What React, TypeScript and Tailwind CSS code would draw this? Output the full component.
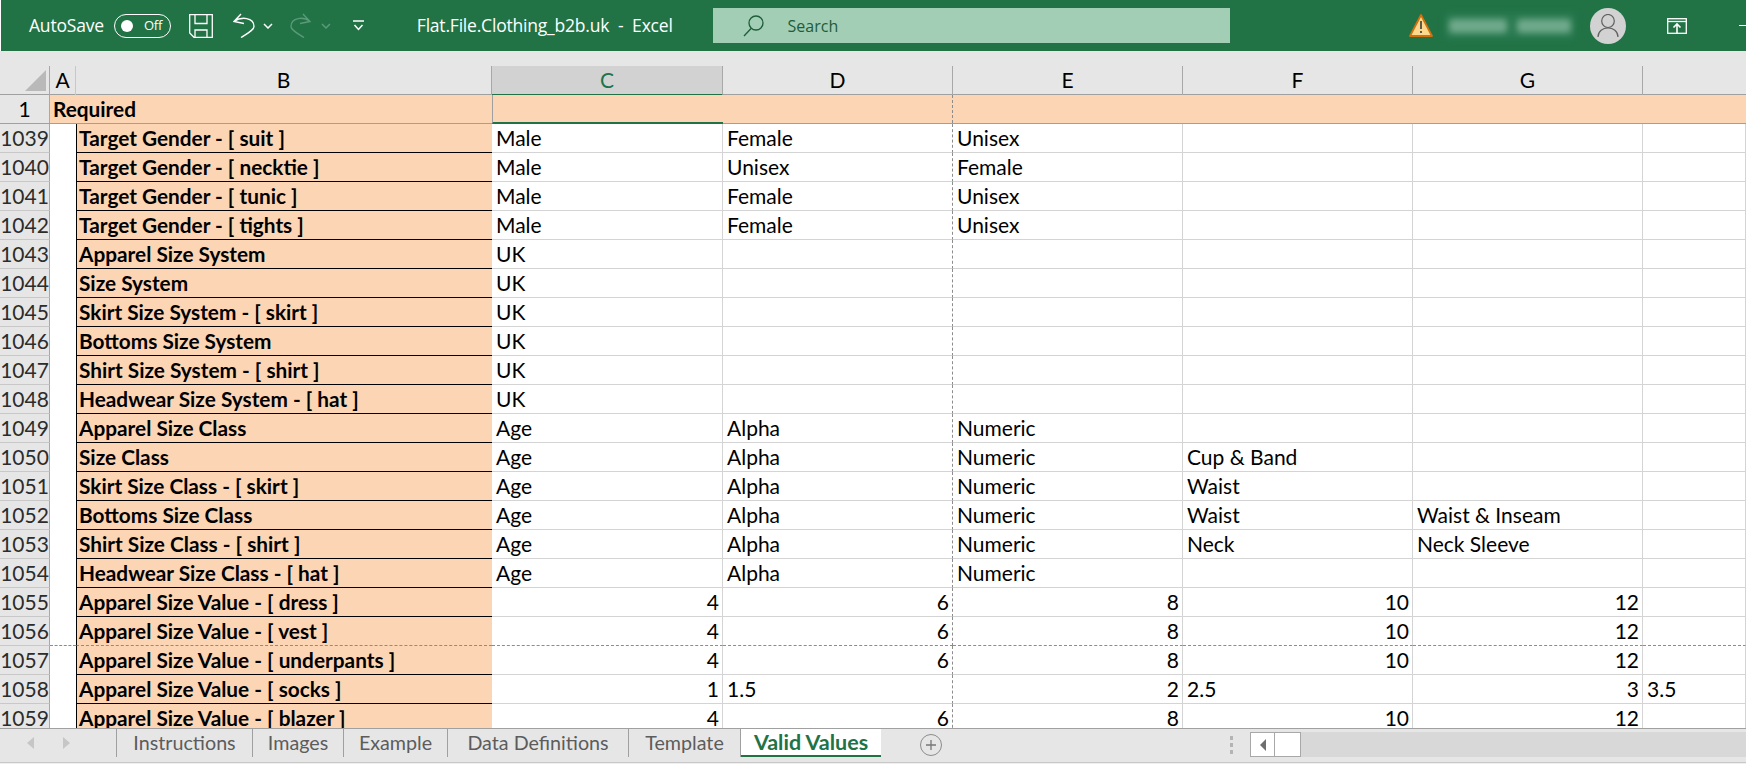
import React from "react";

type Cell = string | number;

const rows: [string, string, Cell[]][] = [
  ["1039", "Target Gender - [ suit ]", ["Male", "Female", "Unisex"]],
  ["1040", "Target Gender - [ necktie ]", ["Male", "Unisex", "Female"]],
  ["1041", "Target Gender - [ tunic ]", ["Male", "Female", "Unisex"]],
  ["1042", "Target Gender - [ tights ]", ["Male", "Female", "Unisex"]],
  ["1043", "Apparel Size System", ["UK"]],
  ["1044", "Size System", ["UK"]],
  ["1045", "Skirt Size System - [ skirt ]", ["UK"]],
  ["1046", "Bottoms Size System", ["UK"]],
  ["1047", "Shirt Size System - [ shirt ]", ["UK"]],
  ["1048", "Headwear Size System - [ hat ]", ["UK"]],
  ["1049", "Apparel Size Class", ["Age", "Alpha", "Numeric"]],
  ["1050", "Size Class", ["Age", "Alpha", "Numeric", "Cup & Band"]],
  ["1051", "Skirt Size Class - [ skirt ]", ["Age", "Alpha", "Numeric", "Waist"]],
  ["1052", "Bottoms Size Class", ["Age", "Alpha", "Numeric", "Waist", "Waist & Inseam"]],
  ["1053", "Shirt Size Class - [ shirt ]", ["Age", "Alpha", "Numeric", "Neck", "Neck Sleeve"]],
  ["1054", "Headwear Size Class - [ hat ]", ["Age", "Alpha", "Numeric"]],
  ["1055", "Apparel Size Value - [ dress ]", [4, 6, 8, 10, 12]],
  ["1056", "Apparel Size Value - [ vest ]", [4, 6, 8, 10, 12]],
  ["1057", "Apparel Size Value - [ underpants ]", [4, 6, 8, 10, 12]],
  ["1058", "Apparel Size Value - [ socks ]", [1, "1.5", 2, "2.5", 3, "3.5"]],
  ["1059", "Apparel Size Value - [ blazer ]", [4, 6, 8, 10, 12]],
];

const columns = [0, 1, 2, 3, 4, 5];
const gridCols = "grid grid-cols-[50px_26px_416px_231px_230px_230px_230px_230px_103px]";

const tabs = [
  { name: "Instructions", width: "w-[136px]" },
  { name: "Images", width: "w-[91px]" },
  { name: "Example", width: "w-[104px]" },
  { name: "Data Definitions", width: "w-[181px]" },
  { name: "Template", width: "w-[112px]" },
];

const TitleBar = () => (
  <div className="flex h-[51px] shrink-0 items-center border-l border-white bg-[#217346] font-['Open_Sans',sans-serif] text-white">
    <span className="ml-[28px] w-[76px] text-[17.5px] leading-none tracking-[-0.2px]">AutoSave</span>
    <div className="ml-[9px] flex h-[24px] w-[57px] items-center rounded-full border border-white pl-[6px]">
      <div className="h-[12px] w-[12px] rounded-full bg-white" />
      <span className="ml-[11px] text-[13px] leading-none tracking-[-0.2px]">Off</span>
    </div>
    <svg className="ml-[18px]" width="24" height="24" viewBox="0 0 24 24" fill="none" stroke="white" strokeWidth="1.3">
      <path d="M.7.7H23.3V23.3H5L.7 19Z" />
      <path d="M6 .7V9.5H18V.7M6 23.3V16H18V23.3" />
    </svg>
    <svg className="ml-[20px]" width="22" height="25" viewBox="0 0 22 25" fill="none" stroke="white" strokeWidth="1.4">
      <path d="M8 1 1 8.5 11 10.5M1 8.500C8 3.500 21 4 21 13.500 21 17 15 20 8 24.500" />
    </svg>
    <svg className="ml-[8px]" width="10" height="6" viewBox="0 0 10 6" fill="none" stroke="white" strokeWidth="1.5">
      <path d="M1 1 5 5 9 1" />
    </svg>
    <svg className="ml-[17px]" width="22" height="25" viewBox="0 0 22 25" fill="none" stroke="#5a9a78" strokeWidth="1.4">
      <path d="M13 1 20 8.500 10 10.500M20 8.500C14 3.500 1 4 1 13.500 1 17 7 20 14 24.500" />
    </svg>
    <svg className="ml-[9px]" width="10" height="6" viewBox="0 0 10 6" fill="none" stroke="#5a9a78" strokeWidth="1.5">
      <path d="M1 1 5 5 9 1" />
    </svg>
    <svg className="ml-[22px]" width="11" height="11" viewBox="0 0 11 11" fill="none" stroke="white" strokeWidth="1.5">
      <path d="M0 1H11M1.500 5 5.500 9.500 9.500 5" />
    </svg>
    <span className="ml-[53px] w-[296px] whitespace-pre text-[17.5px] leading-none tracking-[-0.2px]">Flat.File.Clothing_b2b.uk  -  Excel</span>
    <div className="flex h-[35px] w-[518px] items-center bg-[#a1ceb5] pl-[30px] text-[#1e5c3a]">
      <svg width="21" height="22" viewBox="0 0 21 22" fill="none" stroke="#1e5c3a" strokeWidth="1.300">
        <circle cx="13" cy="8" r="7" />
        <path d="M8 13.500 1 21" />
      </svg>
      <span className="ml-[24px] text-[16px] leading-none">Search</span>
    </div>
    <svg className="ml-[179px]" width="24" height="23" viewBox="0 0 24 23">
      <path d="M12 1 23 22H1Z" fill="#fbd88c" stroke="#d0700f" strokeWidth="1.800" strokeLinejoin="round" />
      <path d="M12 7V15M12 17V19" stroke="#3a3a3a" strokeWidth="1.600" />
    </svg>
    <div className="ml-[12px] flex h-[26px] w-[130px] items-center gap-[10px] bg-[#2a7a50] px-[4px] blur-[3px]">
      <div className="h-[14px] w-[58px] rounded-sm bg-[#6fa98b]" />
      <div className="h-[14px] w-[54px] rounded-sm bg-[#6fa98b]" />
    </div>
    <div className="ml-[15px] flex h-[36px] w-[36px] items-center justify-center rounded-full bg-[#d2d2d2]">
      <svg width="22" height="24" viewBox="0 0 22 24" fill="none" stroke="#5f5f5f" strokeWidth="1.200">
        <ellipse cx="11" cy="7" rx="6.300" ry="6.500" />
        <path d="M1 23C1 17 6 14 11 14S21 17 21 23" />
      </svg>
    </div>
    <svg className="ml-[41px]" width="20" height="16" viewBox="0 0 20 16" fill="none" stroke="white" strokeWidth="1.300">
      <rect x=".7" y=".7" width="18.600" height="14.600" />
      <path d="M.7 3.500H19.300" />
      <path d="M10 15V7M6.500 9.500 10 6 13.500 9.500" strokeWidth="1.600" />
    </svg>
    <div className="ml-[52px] h-px w-[7px] bg-white" />
  </div>
);

const ColumnHeaders = () => (
  <div className={`${gridCols} h-[29px] shrink-0 border-b border-[#a0a0a0] text-[21px] leading-[28px] text-black`}>
    <div className="flex items-center justify-end border-r border-[#a8a8a8] pr-[3px]">
      <svg width="21" height="21" viewBox="0 0 21 21">
        <path d="M21 0V21H0Z" fill="#b9b9b9" />
      </svg>
    </div>
    <div className="border-r border-[#c8c8c8] text-center">A</div>
    <div className="border-r border-[#a8a8a8] text-center">B</div>
    <div className="-mb-px border-b-2 border-r border-b-[#217346] border-r-[#a8a8a8] bg-[#d2d2d2] text-center text-[#217346]">C</div>
    {["D", "E", "F", "G"].map((letter) => (
      <div key={letter} className="border-r border-[#a8a8a8] text-center">
        {letter}
      </div>
    ))}
    <div />
  </div>
);

const RequiredRow = () => (
  <div className={`${gridCols} h-[29px] shrink-0 border-b border-[#a0a0a0] bg-[#fcd5b4] text-[21px] leading-[28px] text-black`}>
    <div className="border-r border-[#a8a8a8] bg-[#e6e6e6] text-center">1</div>
    <div className="col-span-2 pl-[3px] text-[20.8px] font-bold">Required</div>
    <div className="-mb-px border-b-2 border-l border-b-[#217346] border-l-[#a0a0a0]" />
    <div className="border-r border-r-[#8c8c8c] [border-right-style:dashed]" />
  </div>
);

const DataRow = ({ label, name, values }: { label: string; name: string; values: Cell[] }) => {
  const breakRow = label === "1056";
  const line = breakRow ? "border-b border-b-[#8c8c8c] [border-bottom-style:dashed]" : "border-b border-b-[#d4d4d4]";
  return (
    <div className={`${gridCols} h-[29px] shrink-0 text-[21px] leading-[28px] text-black`}>
      <div className="border-b border-r border-b-[#c8c8c8] border-r-[#a8a8a8] bg-[#e6e6e6] text-center text-[#2c2c2c]">{label}</div>
      <div className={breakRow ? line : ""} />
      <div className={`whitespace-nowrap border-l border-l-black bg-[#fcd5b4] pl-[2px] text-[20.8px] font-bold ${breakRow ? line : "border-b border-b-black"}`}>{name}</div>
      {columns.map((col) => {
        const value = values[col];
        const isNumber = typeof value === "number";
        return (
          <div
            key={col}
            className={`overflow-hidden whitespace-nowrap border-r ${col === 1 ? "border-r-[#8c8c8c] [border-right-style:dashed]" : "border-r-[#d4d4d4]"} ${line} ${isNumber ? "pr-[3px] text-right" : "pl-[4px]"}`}
          >
            {value}
          </div>
        );
      })}
    </div>
  );
};

const SheetTabs = () => (
  <div className="flex h-[34px] shrink-0 items-start border-t border-[#a0a0a0] bg-[#e6e6e6] text-[19.7px] text-[#5c5c5c]">
    <div className="flex h-[28px] w-[117px] shrink-0 items-center border-r border-[#a0a0a0] pl-[27px]">
      <svg width="8" height="12" viewBox="0 0 8 12">
        <path d="M7 0V12L0 6Z" fill="#c6c6c6" />
      </svg>
      <svg className="ml-[27px]" width="8" height="12" viewBox="0 0 8 12">
        <path d="M1 0V12L8 6Z" fill="#c6c6c6" />
      </svg>
    </div>
    {tabs.map((tab) => (
      <div key={tab.name} className={`flex h-[28px] ${tab.width} shrink-0 items-center justify-center border-r border-[#a0a0a0]`}>
        {tab.name}
      </div>
    ))}
    <div className="flex h-[28px] w-[140px] shrink-0 items-center justify-center border-b-2 border-[#217346] bg-white text-[21.5px] font-bold text-[#217346]">Valid Values</div>
    <div className="ml-[39px] mt-[5px] flex h-[22px] w-[22px] shrink-0 items-center justify-center rounded-full border border-[#8c8c8c]">
      <svg width="10" height="10" viewBox="0 0 10 10" stroke="#777777" strokeWidth="1.300">
        <path d="M5 0V10M0 5H10" />
      </svg>
    </div>
    <div className="ml-[288px] mt-[7px] flex w-[3px] shrink-0 flex-col gap-[3px]">
      <div className="h-[4px] bg-[#b4b4b4]" />
      <div className="h-[4px] bg-[#b4b4b4]" />
      <div className="h-[4px] bg-[#b4b4b4]" />
    </div>
    <div className="ml-[17px] mt-[3px] flex h-[25px] flex-1 items-stretch bg-[#d8d8d8]">
      <div className="flex w-[25px] items-center justify-center border border-[#a8a8a8] bg-white">
        <svg width="6" height="12" viewBox="0 0 6 12">
          <path d="M6 0V12L0 6Z" fill="#6e6e6e" />
        </svg>
      </div>
      <div className="w-[26px] border-y border-r border-[#a8a8a8] bg-white" />
    </div>
  </div>
);

export default function App() {
  return (
    <div className="flex h-[764px] w-[1746px] flex-col overflow-hidden bg-white font-['Lato',sans-serif]">
      <TitleBar />
      <div className="h-[15px] shrink-0 bg-[#e6e6e6]" />
      <div className="flex min-h-0 flex-1 flex-col bg-[#e6e6e6]">
        <ColumnHeaders />
        <RequiredRow />
        <div className="min-h-0 flex-1 overflow-hidden bg-white">
          {rows.map(([label, name, values]) => (
            <DataRow key={label} label={label} name={name} values={values} />
          ))}
        </div>
      </div>
      <SheetTabs />
      <div className="h-[2px] shrink-0 border-t border-[#c8c8c8] bg-[#f0f0f0]" />
    </div>
  );
}
